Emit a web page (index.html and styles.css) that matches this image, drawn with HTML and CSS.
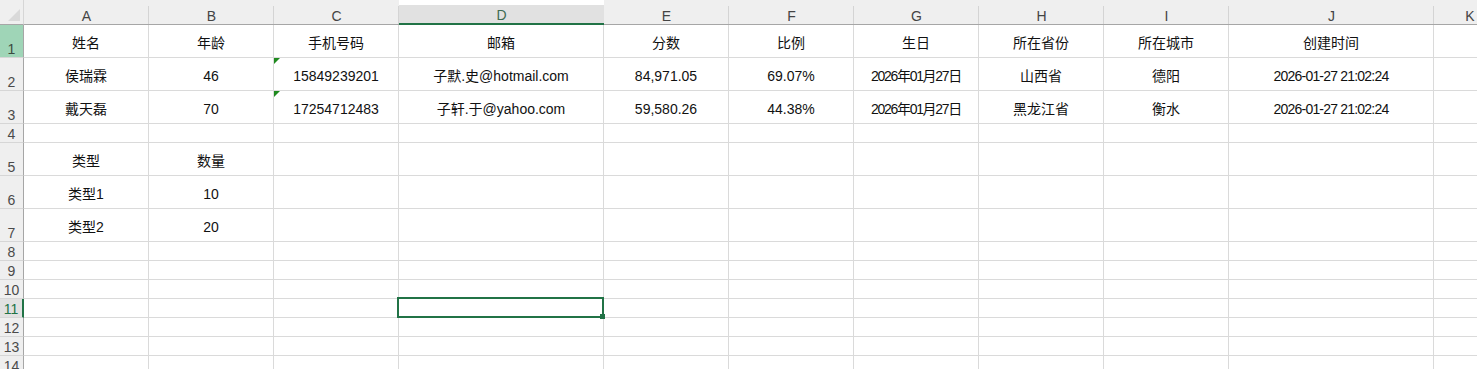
FILE: index.html
```html
<!DOCTYPE html>
<html>
    <head>
        <meta charset="UTF-8"/>
        <link rel="stylesheet" href="styles.css">
    </head>
    <body>
        <div class="Sheet">
            <div class="Corner">
                <svg width="24" height="24" viewBox="0 0 24 24"><polygon points="20,9 20,21 8,21" fill="#d9d9d9"/></svg>
            </div>
            <div class="ColHead">A</div>
            <div class="ColHead">B</div>
            <div class="ColHead">C</div>
            <div class="ColHead Current">D</div>
            <div class="ColHead">E</div>
            <div class="ColHead">F</div>
            <div class="ColHead">G</div>
            <div class="ColHead">H</div>
            <div class="ColHead">I</div>
            <div class="ColHead">J</div>
            <div class="ColHead">K</div>

            <div class="RowHead Marked">1</div>
            <div class="Cell">姓名</div>
            <div class="Cell">年龄</div>
            <div class="Cell">手机号码</div>
            <div class="Cell">邮箱</div>
            <div class="Cell">分数</div>
            <div class="Cell">比例</div>
            <div class="Cell">生日</div>
            <div class="Cell">所在省份</div>
            <div class="Cell">所在城市</div>
            <div class="Cell">创建时间</div>
            <div class="Cell"></div>

            <div class="RowHead">2</div>
            <div class="Cell">侯瑞霖</div>
            <div class="Cell">46</div>
            <div class="Cell Note">15849239201</div>
            <div class="Cell">子默.史@hotmail.com</div>
            <div class="Cell">84,971.05</div>
            <div class="Cell">69.07%</div>
            <div class="Cell Date">2026年01月27日</div>
            <div class="Cell">山西省</div>
            <div class="Cell">德阳</div>
            <div class="Cell Time">2026-01-27 21:02:24</div>
            <div class="Cell"></div>

            <div class="RowHead">3</div>
            <div class="Cell">戴天磊</div>
            <div class="Cell">70</div>
            <div class="Cell Note">17254712483</div>
            <div class="Cell">子轩.于@yahoo.com</div>
            <div class="Cell">59,580.26</div>
            <div class="Cell">44.38%</div>
            <div class="Cell Date">2026年01月27日</div>
            <div class="Cell">黑龙江省</div>
            <div class="Cell">衡水</div>
            <div class="Cell Time">2026-01-27 21:02:24</div>
            <div class="Cell"></div>

            <div class="RowHead">4</div>
            <div class="Cell"></div><div class="Cell"></div><div class="Cell"></div><div class="Cell"></div><div class="Cell"></div><div class="Cell"></div><div class="Cell"></div><div class="Cell"></div><div class="Cell"></div><div class="Cell"></div><div class="Cell"></div>

            <div class="RowHead">5</div>
            <div class="Cell">类型</div>
            <div class="Cell">数量</div>
            <div class="Cell"></div><div class="Cell"></div><div class="Cell"></div><div class="Cell"></div><div class="Cell"></div><div class="Cell"></div><div class="Cell"></div><div class="Cell"></div><div class="Cell"></div>

            <div class="RowHead">6</div>
            <div class="Cell">类型1</div>
            <div class="Cell">10</div>
            <div class="Cell"></div><div class="Cell"></div><div class="Cell"></div><div class="Cell"></div><div class="Cell"></div><div class="Cell"></div><div class="Cell"></div><div class="Cell"></div><div class="Cell"></div>

            <div class="RowHead">7</div>
            <div class="Cell">类型2</div>
            <div class="Cell">20</div>
            <div class="Cell"></div><div class="Cell"></div><div class="Cell"></div><div class="Cell"></div><div class="Cell"></div><div class="Cell"></div><div class="Cell"></div><div class="Cell"></div><div class="Cell"></div>

            <div class="RowHead">8</div>
            <div class="Cell"></div><div class="Cell"></div><div class="Cell"></div><div class="Cell"></div><div class="Cell"></div><div class="Cell"></div><div class="Cell"></div><div class="Cell"></div><div class="Cell"></div><div class="Cell"></div><div class="Cell"></div>

            <div class="RowHead">9</div>
            <div class="Cell"></div><div class="Cell"></div><div class="Cell"></div><div class="Cell"></div><div class="Cell"></div><div class="Cell"></div><div class="Cell"></div><div class="Cell"></div><div class="Cell"></div><div class="Cell"></div><div class="Cell"></div>

            <div class="RowHead">10</div>
            <div class="Cell"></div><div class="Cell"></div><div class="Cell"></div><div class="Cell"></div><div class="Cell"></div><div class="Cell"></div><div class="Cell"></div><div class="Cell"></div><div class="Cell"></div><div class="Cell"></div><div class="Cell"></div>

            <div class="RowHead Current">11</div>
            <div class="Cell"></div><div class="Cell"></div><div class="Cell"></div>
            <div class="Cell Active"></div>
            <div class="Cell"></div><div class="Cell"></div><div class="Cell"></div><div class="Cell"></div><div class="Cell"></div><div class="Cell"></div><div class="Cell"></div>

            <div class="RowHead">12</div>
            <div class="Cell"></div><div class="Cell"></div><div class="Cell"></div><div class="Cell"></div><div class="Cell"></div><div class="Cell"></div><div class="Cell"></div><div class="Cell"></div><div class="Cell"></div><div class="Cell"></div><div class="Cell"></div>

            <div class="RowHead">13</div>
            <div class="Cell"></div><div class="Cell"></div><div class="Cell"></div><div class="Cell"></div><div class="Cell"></div><div class="Cell"></div><div class="Cell"></div><div class="Cell"></div><div class="Cell"></div><div class="Cell"></div><div class="Cell"></div>

            <div class="RowHead">14</div>
            <div class="Cell"></div><div class="Cell"></div><div class="Cell"></div><div class="Cell"></div><div class="Cell"></div><div class="Cell"></div><div class="Cell"></div><div class="Cell"></div><div class="Cell"></div><div class="Cell"></div><div class="Cell"></div>
        </div>
    </body>
</html>
```

FILE: styles.css
```css
body
{
    margin:0;
    overflow:hidden;
    background:#fff;
    font-family:"Liberation Sans", "Noto Sans CJK SC", sans-serif;
    font-size:14px;
}
.Sheet
{
    display:grid;
    grid-template-columns:24px 125px 125px 125px 205px 125px 125px 125px 125px 125px 205px 72px;
    grid-template-rows:25px 33px 33px 33px 19px 33px 33px 33px;
    grid-auto-rows:19px;
}

/* headers */
.Corner
{
    background:#efefef;
    border-right:1px solid #d6d6d6;
    border-bottom:1px solid #a6a6a6;
    box-sizing:border-box;
}
.Corner svg
{
    display:block;
}
.ColHead
{
    display:flex;
    align-items:flex-end;
    justify-content:center;
    box-sizing:border-box;
    background:#efefef linear-gradient(#d4d4d4, #d4d4d4) no-repeat right bottom / 1px 18px;
    border-bottom:1px solid #a6a6a6;
    color:#444;
    font-size:14px;
    line-height:16px;
}
.ColHead.Current
{
    padding-top:5px;
    background:#e1e1e1;
    background-clip:content-box;
    border-bottom:2px solid #217346;
    color:#3d6b52;
    line-height:15px;
}
.RowHead
{
    display:flex;
    align-items:flex-end;
    justify-content:center;
    box-sizing:border-box;
    background:#efefef;
    border-right:1px solid #a6a6a6;
    border-bottom:1px solid #d6d6d6;
    color:#4a4a4a;
    font-size:14px;
    line-height:16px;
}
.RowHead.Marked
{
    background:#9fd5b7;
    color:#3b4a40;
}
.RowHead.Current
{
    background:#e1e1e1;
    border-right:2px solid #217346;
    color:#217346;
}

/* cells */
.Cell
{
    position:relative;
    display:flex;
    align-items:flex-end;
    justify-content:center;
    box-sizing:border-box;
    padding-bottom:5px;
    border-right:1px solid #dadada;
    border-bottom:1px solid #dadada;
    color:#111;
    line-height:18px;
    white-space:nowrap;
}
.Cell.Date
{
    letter-spacing:-1.3px;
}
.Cell.Time
{
    letter-spacing:-0.8px;
}
.Cell.Note::before
{
    content:"";
    position:absolute;
    left:0;
    top:0;
    border-top:6px solid #1f8a1f;
    border-right:6px solid transparent;
}
.Cell.Active::after
{
    content:"";
    position:absolute;
    left:-2px;
    top:-2px;
    right:-1px;
    bottom:-1px;
    border:2px solid #217346;
}
.Cell.Active::before
{
    content:"";
    position:absolute;
    right:-2px;
    bottom:-2px;
    width:5px;
    height:5px;
    background:#217346;
    z-index:1;
}
```
